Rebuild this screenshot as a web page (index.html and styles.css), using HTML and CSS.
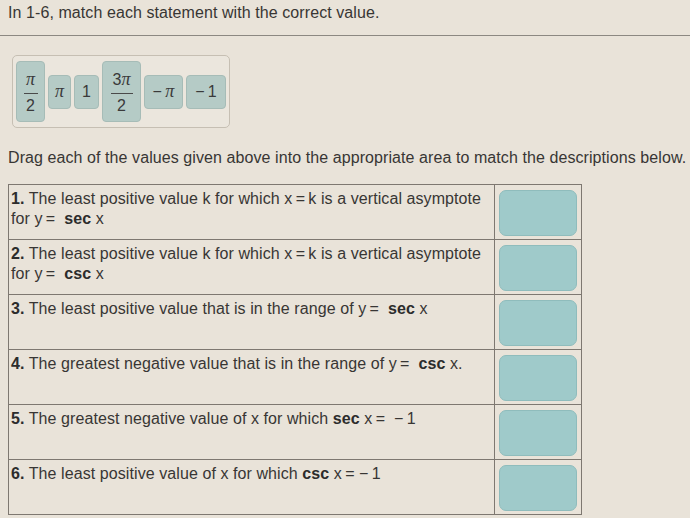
FILE: index.html
```html
<!DOCTYPE html>
<html>
<head>
<meta charset="utf-8">
<link rel="stylesheet" href="styles.css">
</head>
<body>
<div class="page">
  <p class="title">In 1-6, match each statement with the correct value.</p>
  <div class="rule"></div>
  <div class="bank">
    <div class="tile frac w29"><span class="pi">π</span><span class="bar"></span><span>2</span></div>
    <div class="tile w23"><span class="pi">π</span></div>
    <div class="tile w25">1</div>
    <div class="tile frac w39"><span>3<span class="pi">π</span></span><span class="bar"></span><span>2</span></div>
    <div class="tile w39">−&thinsp;<span class="pi">π</span></div>
    <div class="tile w40">−&thinsp;1</div>
  </div>
  <p class="instr">Drag each of the values given above into the appropriate area to match the descriptions below.</p>
  <div class="table">
    <div class="row">
      <div class="desc"><b>1.</b> The least positive value k for which x&thinsp;=&thinsp;k is a vertical asymptote<br>for y&thinsp;=&nbsp; <b>sec</b> x</div>
      <div class="cell"><div class="drop"></div></div>
    </div>
    <div class="row">
      <div class="desc"><b>2.</b> The least positive value k for which x&thinsp;=&thinsp;k is a vertical asymptote<br>for y&thinsp;=&nbsp; <b>csc</b> x</div>
      <div class="cell"><div class="drop"></div></div>
    </div>
    <div class="row">
      <div class="desc"><b>3.</b> The least positive value that is in the range of y&thinsp;=&nbsp; <b>sec</b> x</div>
      <div class="cell"><div class="drop"></div></div>
    </div>
    <div class="row">
      <div class="desc"><b>4.</b> The greatest negative value that is in the range of y&thinsp;=&nbsp; <b>csc</b> x.</div>
      <div class="cell"><div class="drop"></div></div>
    </div>
    <div class="row">
      <div class="desc"><b>5.</b> The greatest negative value of x for which <b>sec</b> x&thinsp;=&nbsp; −&thinsp;1</div>
      <div class="cell"><div class="drop"></div></div>
    </div>
    <div class="row">
      <div class="desc"><b>6.</b> The least positive value of x for which <b>csc</b> x&thinsp;=&nbsp;−&thinsp;1</div>
      <div class="cell"><div class="drop"></div></div>
    </div>
  </div>
</div>
</body>
</html>
```
FILE: styles.css
```css
html, body {
  margin: 0;
  padding: 0;
  background: #e9e3d9;
}
.page {
  width: 690px;
  height: 518px;
  overflow: hidden;
  font-family: "Liberation Sans", Arial, sans-serif;
  color: #383634;
  font-size: 16px;
  letter-spacing: 0.08px;
}
.title {
  margin: 0;
  padding: 4px 0 0 8px;
  line-height: 18px;
}
.rule {
  margin-top: 13px;
  height: 1px;
  background: #8c8882;
}
.bank {
  margin: 19px 0 0 12px;
  width: 210px;
  height: 65px;
  padding: 3px 3px;
  border: 1px solid #c6bfb3;
  border-radius: 5px;
  background: #ebe6dd;
  display: flex;
  align-items: center;
  gap: 3px;
}
.tile {
  height: 34px;
  background: #b5cbc6;
  border: 1px solid #a6bcb7;
  border-radius: 4px;
  box-sizing: border-box;
  display: flex;
  align-items: center;
  justify-content: center;
  font-size: 16px;
  color: #3a3a3a;
}
.tile.frac {
  height: 61px;
  flex-direction: column;
  gap: 3px;
}
.tile .pi {
  font-size: 18px;
}
.bar {
  display: block;
  width: 14px;
  height: 1px;
  background: #4a4a4a;
}
.w39 .bar { width: 22px; }
.w23 { width: 23px; }
.w25 { width: 25px; }
.w29 { width: 29px; }
.w39 { width: 39px; }
.w40 { width: 40px; }
.pi {
  font-family: "Liberation Serif", "Times New Roman", serif;
  font-style: italic;
}
.instr {
  margin: 21px 0 0 8px;
  line-height: 18px;
  white-space: nowrap;
}
.table {
  margin: 17px 0 0 8px;
  width: 572px;
  border: 1px solid #7e7871;
  border-bottom: none;
}
.row {
  display: flex;
  height: 54px;
  border-bottom: 1px solid #7e7871;
}
.desc {
  flex: 1;
  padding: 4px 0 0 2px;
  line-height: 20px;
  border-right: 1px solid #7e7871;
}
.desc b {
  color: #2c2c2c;
}
.cell {
  width: 86px;
  padding: 5px 4px 4px 4px;
  box-sizing: border-box;
}
.drop {
  height: 46px;
  background: #9fcaca;
  border: 1px solid #8fbcbc;
  border-radius: 7px;
  box-sizing: border-box;
}
```
